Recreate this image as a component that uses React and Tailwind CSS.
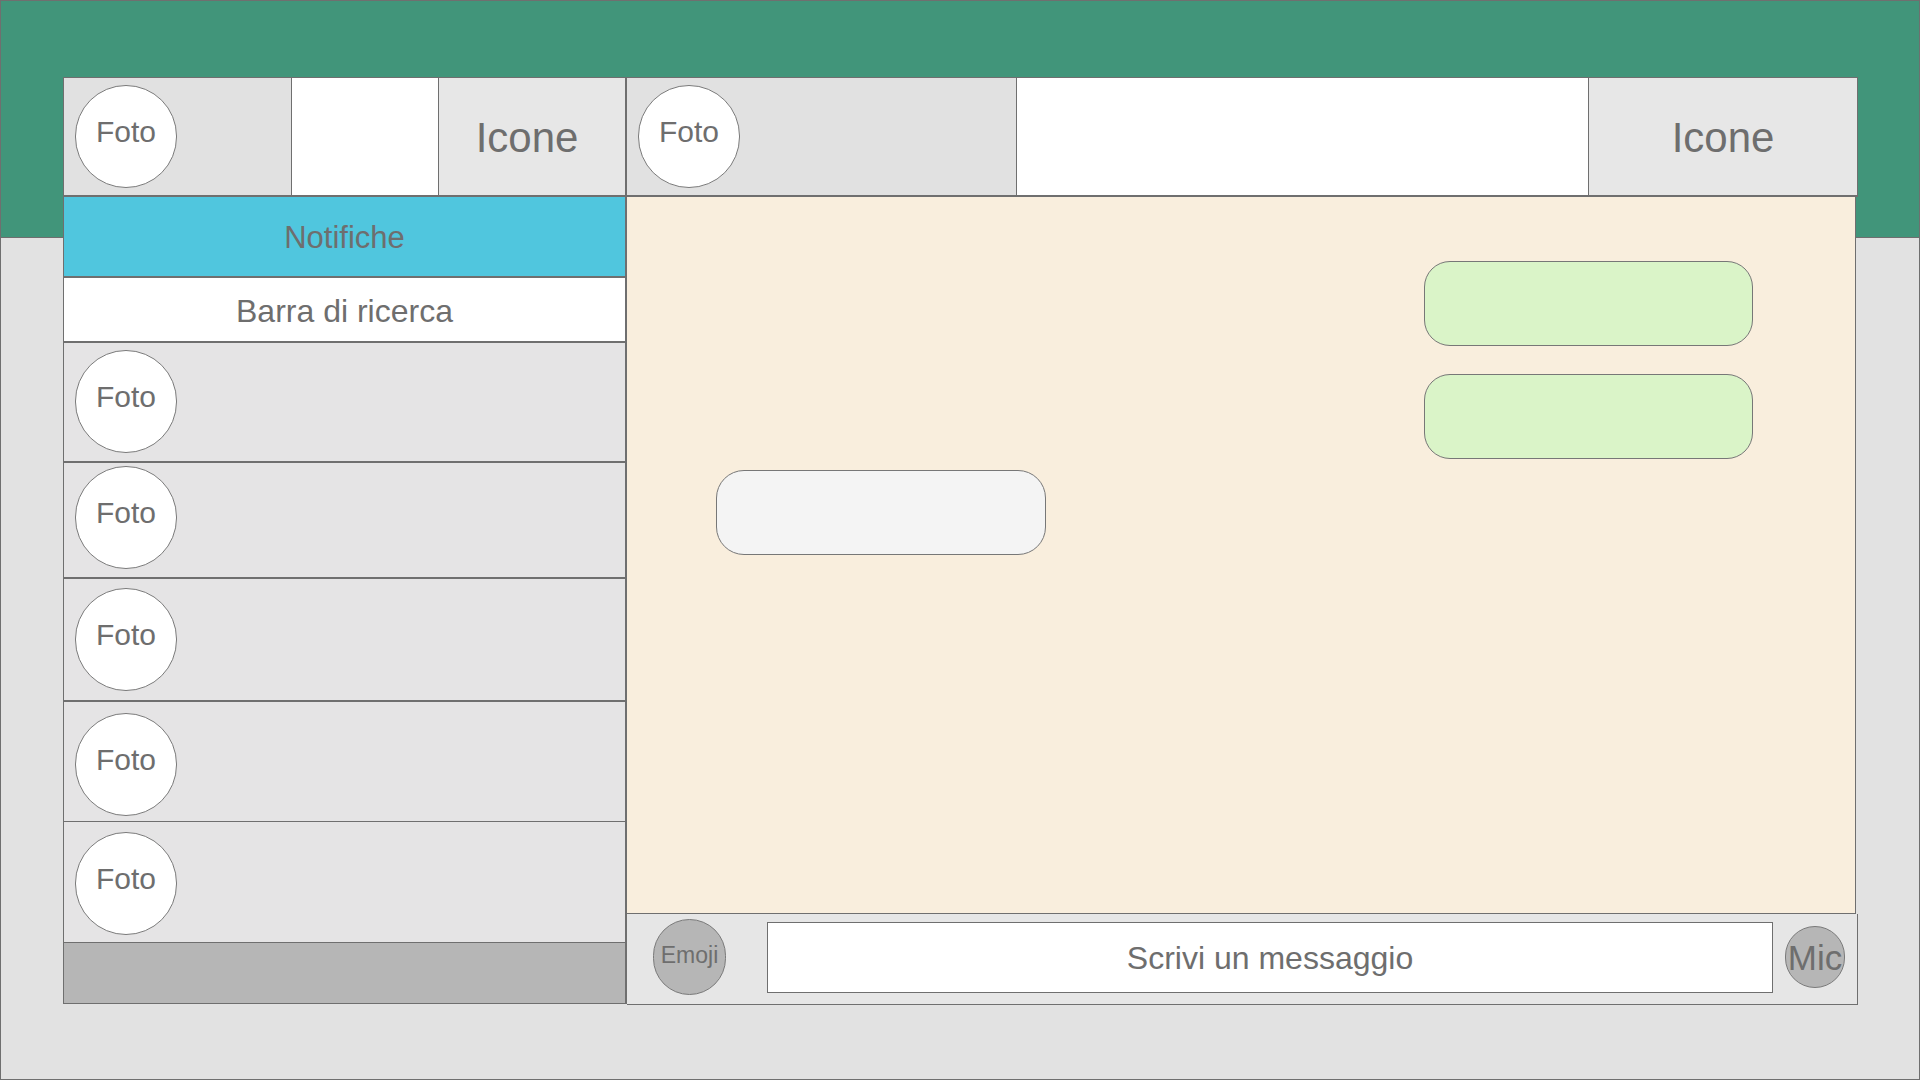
import React from "react";

function Avatar({ className = "" }) {
  return (
    <div
      className={
        "w-[102px] h-[103px] shrink-0 rounded-full bg-white border border-[#7a7a7a] flex items-center justify-center pb-[10px] text-[30px] leading-none text-[#6e6e6e] " +
        className
      }
    >
      Foto
    </div>
  );
}

function Row({ h, b, pt }) {
  return (
    <div className={`${h} ${b} ${pt} border-[#6f6f6f] bg-[#e5e4e5] flex items-start pl-[11px]`}>
      <Avatar />
    </div>
  );
}

export default function App() {
  return (
    <div
      className="w-[1920px] h-[1080px] border border-[#6f6f6f] pt-[76px] pl-[62px] bg-[linear-gradient(to_bottom,#41957a_0px,#41957a_236px,#6f6f6f_236px,#6f6f6f_237px,#e2e2e2_237px)]"
      style={{ fontFamily: '"Liberation Sans", Arial, sans-serif' }}
    >
      <div className="flex items-start text-[#6e6e6e]">
        {/* Left panel */}
        <div className="w-[564px] flex flex-col border-t border-l border-b border-r-2 border-[#6f6f6f]">
          {/* header */}
          <div className="h-[119px] flex border-b-2 border-[#6f6f6f]">
            <div className="w-[228px] bg-[#e1e1e1] border-r border-[#6f6f6f] flex items-center pl-[11px]">
              <Avatar />
            </div>
            <div className="w-[147px] bg-white border-r border-[#6f6f6f]" />
            <div className="flex-1 bg-[#e7e7e7] flex items-center justify-center text-[42px] leading-none pr-[10px] pt-[2px]">
              Icone
            </div>
          </div>
          <div className="h-[81px] bg-[#50c6de] border-b-2 border-[#6f6f6f] flex items-center justify-center text-[31px] leading-none pt-[2px]">
            Notifiche
          </div>
          <div className="h-[65px] bg-white border-b-2 border-[#6f6f6f] flex items-center justify-center text-[32px] leading-none pt-[2px]">
            Barra di ricerca
          </div>
          <Row h="h-[120px]" b="border-b-2" pt="pt-[7px]" />
          <Row h="h-[116px]" b="border-b-2" pt="pt-[3px]" />
          <Row h="h-[123px]" b="border-b-2" pt="pt-[9px]" />
          <Row h="h-[120px]" b="border-b" pt="pt-[11px]" />
          <Row h="h-[121px]" b="border-b" pt="pt-[10px]" />
          <div className="h-[60px] bg-[#b6b6b6]" />
        </div>

        {/* Right panel */}
        <div className="w-[1231px] flex flex-col border-t border-[#6f6f6f]">
          <div className="h-[119px] flex border-b-2 border-[#6f6f6f]">
            <div className="w-[390px] bg-[#e1e1e1] border-r border-[#6f6f6f] flex items-center pl-[11px]">
              <Avatar />
            </div>
            <div className="w-[572px] bg-white border-r border-[#6f6f6f]" />
            <div className="flex-1 bg-[#e7e7e7] border-r border-[#6f6f6f] flex items-center justify-center text-[42px] leading-none pt-[2px]">
              Icone
            </div>
          </div>
          <div className="h-[717px] mr-[2px] bg-[#f9eedd] border-r border-b border-[#6f6f6f] flex flex-col pt-[64px]">
            <div className="self-end mr-[102px] w-[329px] h-[85px] rounded-[26px] bg-[#daf4c8] border border-[#777777]" />
            <div className="self-end mr-[102px] mt-[28px] w-[329px] h-[85px] rounded-[26px] bg-[#daf4c8] border border-[#777777]" />
            <div className="self-start ml-[89px] mt-[11px] w-[330px] h-[85px] rounded-[28px] bg-[#f4f4f4] border border-[#777777]" />
          </div>
          <div className="h-[91px] bg-[#e6e6e6] border-r border-b border-[#6f6f6f] flex items-center pl-[26px] pb-[4px]">
            <div className="w-[73px] h-[76px] shrink-0 rounded-full bg-[#b6b6b6] border border-[#7a7a7a] flex items-center justify-center text-[23px] leading-none pb-[4px]">
              Emoji
            </div>
            <div className="ml-[41px] w-[1006px] h-[71px] bg-white border border-[#6f6f6f] flex items-center justify-center text-[32px] leading-none pt-[2px]">
              Scrivi un messaggio
            </div>
            <div className="ml-[12px] w-[60px] h-[62px] shrink-0 rounded-full bg-[#b6b6b6] border border-[#7a7a7a] flex items-center justify-center text-[35px] leading-none overflow-visible whitespace-nowrap">
              Mic
            </div>
          </div>
        </div>
      </div>
    </div>
  );
}
